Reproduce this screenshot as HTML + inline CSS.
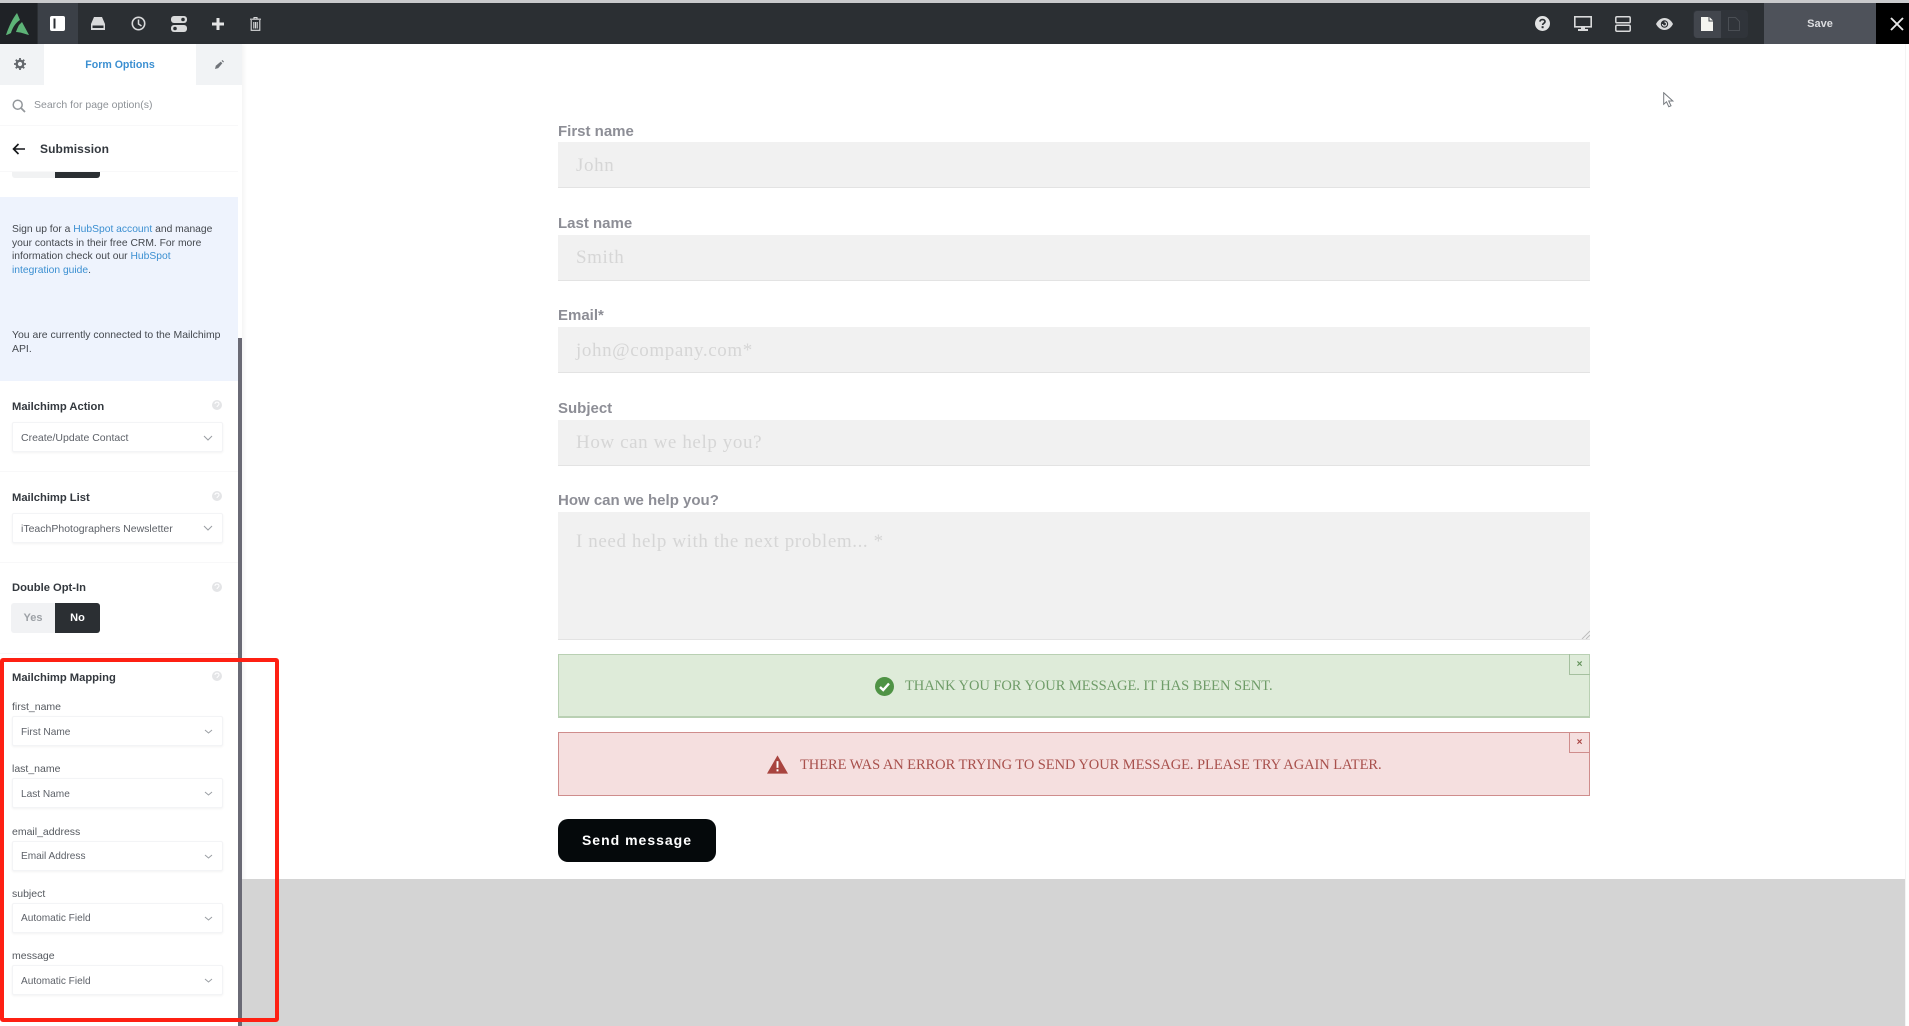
<!DOCTYPE html>
<html lang="en"><head><meta charset="utf-8"><title>Form Options</title>
<style>
html,body{margin:0;padding:0;width:1909px;height:1026px;overflow:hidden;background:#fff;font-family:"Liberation Sans",sans-serif}
div,svg,span.a{position:absolute}
.t{position:absolute;white-space:nowrap;line-height:16px}
.lab{font-size:11.2px;font-weight:700;color:#33383e;left:12px}
.sel{left:12px;width:211px;height:30px;background:#fff;border:1px solid #f3f4f6;box-shadow:0 1px 2px rgba(0,0,0,.05);border-radius:2px;box-sizing:border-box}
.sv{left:21px;font-size:10.5px;color:#5d6168}
.sm{font-size:10.1px}
.f{left:12px;font-size:10.5px;color:#55595f}
.hl{left:0;width:238px;height:1px;background:#f8f8f9}
.fl{left:558px;font-size:15px;font-weight:700;color:#8d8e96;line-height:18px;position:absolute;white-space:nowrap}
.in{left:558px;width:1032px;height:46px;background:#f1f1f1;border-bottom:1px solid #e3e3e3;box-sizing:border-box}
.ph{position:absolute;left:18px;font-family:"Liberation Serif",serif;font-size:19px;color:#d6d6d6;line-height:22px;white-space:nowrap;letter-spacing:.6px}
</style></head><body>

<div style="left:0;top:0;width:1909px;height:3px;background:#c9cacc"></div>
<div style="left:0;top:3px;width:1909px;height:41px;background:#2b2f33"></div>
<div style="left:0;top:3px;width:37px;height:41px;background:#1f2226"></div>
<div style="left:38px;top:3px;width:40px;height:41px;background:#3b4047"></div>

<svg style="left:5px;top:12px" width="25" height="24" viewBox="0 0 25 24"><path d="M1 23 C4 14 8 6 12 1 L15 8 C10 11 7 17 6 21 C4 22 2 23 1 23Z" fill="#5db377"/><path d="M14 13 L17 10 L24 23 C20 22 15 20 11 20 C12 17 13 15 14 13Z" fill="#5db377"/></svg>
<svg style="left:50px;top:16px" width="15" height="15" viewBox="0 0 15 15"><rect width="15" height="15" rx="2" fill="#fff"/><rect x="3.5" y="2.5" width="2" height="10" fill="#2b2f33"/></svg>
<svg style="left:91px;top:17px" width="14" height="13" viewBox="0 0 14 13"><path d="M3 0H11L14 7V13H0V7Z" fill="#d9dadb"/><rect x="1.5" y="8.5" width="11" height="2.5" fill="#2b2f33"/></svg>
<svg style="left:131px;top:16px" width="15" height="15" viewBox="0 0 15 15"><circle cx="7.5" cy="7.5" r="6.2" fill="none" stroke="#d9dadb" stroke-width="1.6"/><path d="M7.5 3.5V8L10.5 10" fill="none" stroke="#d9dadb" stroke-width="1.5"/></svg>
<svg style="left:171px;top:16px" width="16" height="16" viewBox="0 0 16 16"><rect width="16" height="7" rx="3" fill="#d9dadb"/><rect y="9" width="16" height="7" rx="3" fill="#d9dadb"/><circle cx="12" cy="3.5" r="1.8" fill="#2b2f33"/><circle cx="4" cy="12.5" r="1.8" fill="#2b2f33"/></svg>
<svg style="left:212px;top:18px" width="12" height="12" viewBox="0 0 12 12"><path d="M4.5 0H7.5V4.5H12V7.5H7.5V12H4.5V7.5H0V4.5H4.5Z" fill="#e4e5e6"/></svg>
<svg style="left:250px;top:17px" width="11" height="14" viewBox="0 0 11 14"><path d="M0 2.2H11M4 2V.6H7V2M1.2 3V13.3H9.8V3M3.8 5V11.5M5.5 5V11.5M7.2 5V11.5" fill="none" stroke="#d9dadb" stroke-width="1.1"/></svg>

<svg style="left:1535px;top:16px" width="15" height="15" viewBox="0 0 15 15"><circle cx="7.5" cy="7.5" r="7.5" fill="#e2e3e4"/><path d="M5 5.6C5 2.9 10 2.9 10 5.6C10 7.4 7.6 7.3 7.6 9" fill="none" stroke="#2b2f33" stroke-width="1.7"/><rect x="6.6" y="10.2" width="2" height="2" fill="#2b2f33"/></svg>
<svg style="left:1574px;top:16px" width="18" height="15" viewBox="0 0 18 15"><rect x=".8" y=".8" width="16.4" height="10" fill="none" stroke="#d9dadb" stroke-width="1.6"/><path d="M7 11V13H4V15H14V13H11V11Z" fill="#d9dadb"/></svg>
<svg style="left:1615px;top:16px" width="16" height="16" viewBox="0 0 16 16"><rect x=".8" y=".8" width="14.4" height="6" rx="1.2" fill="none" stroke="#d9dadb" stroke-width="1.5"/><rect x=".8" y="9.2" width="14.4" height="6" rx="1.2" fill="none" stroke="#d9dadb" stroke-width="1.5"/></svg>
<svg style="left:1656px;top:18px" width="17" height="12" viewBox="0 0 17 12"><path d="M0 6C4-2 13-2 17 6C13 14 4 14 0 6Z" fill="#d9dadb"/><circle cx="8.5" cy="6" r="3.7" fill="#2b2f33"/><path d="M6.5 6A2 2 0 1 0 8.5 4" fill="none" stroke="#d9dadb" stroke-width="1.2"/></svg>
<div style="left:1693px;top:10px;width:55px;height:28px;background:#30343a;border-radius:4px"></div>
<div style="left:1694px;top:11px;width:27px;height:27px;background:#42464d;border-radius:3px 0 0 3px"></div>
<svg style="left:1701px;top:17px" width="12" height="14" viewBox="0 0 12 14"><path d="M0 0H7.5V4.5H12V14H0ZM8.5 0L12 3.5H8.5Z" fill="#f4f4f0"/></svg>
<svg style="left:1728px;top:17px" width="12" height="14" viewBox="0 0 12 14"><path d="M.5.5H7.500L11.500 4.500V13.500H.5Z" fill="none" stroke="#4a4e54"/></svg>
<div style="left:1764px;top:3px;width:112px;height:41px;background:#4e525a"></div>
<div class="t" style="left:1764px;width:112px;text-align:center;top:16px;font-size:11px;font-weight:700;color:#dcdde0">Save</div>
<div style="left:1876px;top:3px;width:33px;height:41px;background:#000"></div>
<svg style="left:1890px;top:17px" width="14" height="14" viewBox="0 0 14 14"><path d="M1 1L13 13M13 1L1 13" stroke="#e8e8e8" stroke-width="1.9"/></svg>

<div style="left:0;top:44px;width:242px;height:982px;background:#fff;box-shadow:2px 0 4px rgba(0,0,0,.05)"></div>
<div style="left:0;top:44px;width:44px;height:41px;background:#f1f3f5"></div>
<div style="left:196px;top:44px;width:46px;height:41px;background:#f1f3f5"></div>
<svg style="left:14px;top:58px" width="12" height="12" viewBox="0 0 13 13"><circle cx="6.5" cy="6.5" r="3.6" fill="none" stroke="#64686d" stroke-width="2.6"/><path d="M6.5 0V2.5M6.5 10.5V13M0 6.5H2.5M10.500 6.5H13M1.900 1.900L3.600 3.600M9.400 9.400L11.100 11.100M11.100 1.900L9.400 3.600M3.600 9.400L1.900 11.100" stroke="#64686d" stroke-width="2"/></svg>
<div class="t" style="left:44px;width:152px;text-align:center;top:57px;font-size:10.6px;font-weight:700;color:#3b8fd1">Form Options</div>
<svg style="left:215px;top:60px" width="9" height="9" viewBox="0 0 11 11"><path d="M0 11L1 7L7 2L9 4L4 10Z" fill="#707479"/><path d="M8 1L9 0L11 2L10 3Z" fill="#707479"/></svg>
<svg style="left:12px;top:99px" width="14" height="14" viewBox="0 0 14 14"><circle cx="5.7" cy="5.7" r="4.5" fill="none" stroke="#93979b" stroke-width="1.5"/><path d="M9 9L13 13" stroke="#93979b" stroke-width="1.8"/></svg>
<div class="t" style="left:34px;top:97px;font-size:10.5px;color:#8e9297">Search for page option(s)</div>
<div class="hl" style="top:125px"></div>
<svg style="left:12px;top:143px" width="13" height="12" viewBox="0 0 13 12"><path d="M13 6H2M6.5 1L1.5 6L6.5 11" fill="none" stroke="#15171a" stroke-width="1.6"/></svg>
<div class="t" style="left:40px;top:141px;font-size:12px;font-weight:700;color:#33383e;letter-spacing:.1px">Submission</div>
<div class="hl" style="top:171px"></div>
<div style="left:12px;top:172px;width:43px;height:6px;background:#f1f2f3;border-radius:0 0 0 3px"></div>
<div style="left:55px;top:172px;width:45px;height:6px;background:#2b2f33;border-radius:0 0 3px 0"></div>

<div style="left:0;top:197px;width:238px;height:184px;background:#eef3fd"></div>
<div class="f" style="top:223px;line-height:13.5px;white-space:nowrap;font-size:10.3px;color:#44484e;position:absolute">Sign up for a <span style="color:#3b8fd1">HubSpot account</span> and manage<br>your contacts in their free CRM. For more<br>information check out our <span style="color:#3b8fd1">HubSpot</span><br><span style="color:#3b8fd1">integration guide</span>.</div>
<div class="f" style="top:329px;line-height:13.5px;white-space:nowrap;font-size:10.45px;color:#44484e;position:absolute">You are currently connected to the Mailchimp<br>API.</div>

<div class="t lab" style="top:399px">Mailchimp Action</div>
<div class="sel" style="top:422px"></div><div class="t sv" style="top:430px">Create/Update Contact</div>
<div class="hl" style="top:471px"></div>
<div class="t lab" style="top:490px">Mailchimp List</div>
<div class="sel" style="top:513px"></div><div class="t sv" style="top:521px">iTeachPhotographers Newsletter</div>
<div class="hl" style="top:562px"></div>
<div class="t lab" style="top:580px">Double Opt-In</div>
<div style="left:11px;top:603px;width:44px;height:30px;background:#f1f2f4;border-radius:3px 0 0 3px"></div>
<div class="t" style="left:11px;width:44px;text-align:center;top:610px;font-size:11px;font-weight:700;color:#9da1a6">Yes</div>
<div style="left:55px;top:603px;width:45px;height:30px;background:#2b2f33;border-radius:0 3px 3px 0"></div>
<div class="t" style="left:55px;width:45px;text-align:center;top:610px;font-size:11px;font-weight:700;color:#fff">No</div>
<div class="hl" style="top:653px"></div>

<div class="t lab" style="top:670px">Mailchimp Mapping</div>
<div class="t f" style="top:699px">first_name</div>
<div class="sel" style="top:716px"></div><div class="t sv sm" style="top:725px">First Name</div>
<div class="t f" style="top:761px">last_name</div>
<div class="sel" style="top:778px"></div><div class="t sv sm" style="top:787px">Last Name</div>
<div class="t f" style="top:824px">email_address</div>
<div class="sel" style="top:841px"></div><div class="t sv sm" style="top:849px">Email Address</div>
<div class="t f" style="top:886px">subject</div>
<div class="sel" style="top:903px"></div><div class="t sv sm" style="top:911px">Automatic Field</div>
<div class="t f" style="top:948px">message</div>
<div class="sel" style="top:965px"></div><div class="t sv sm" style="top:974px">Automatic Field</div>

<svg style="left:0;top:0;pointer-events:none" width="242" height="1026" viewBox="0 0 242 1026">
<g fill="none" stroke="#9a9ea3" stroke-width="1"><path d="M204 436L208 440L212 436M204 526L208 530L212 526M205 730L208.500 733L212 730M205 792L208.500 795L212 792M205 855L208.500 858L212 855M205 917L208.500 920L212 917M205 979L208.500 982L212 979"/></g>
<g fill="#e4e5e7"><circle cx="217" cy="405" r="5"/><circle cx="217" cy="496" r="5"/><circle cx="217" cy="587" r="5"/><circle cx="217" cy="676" r="5"/></g>
<g fill="none" stroke="#fff" stroke-width="1"><path d="M215 404c0-2.500 4-2.500 4 0c0 1.500-2 1.500-2 3M215 495c0-2.500 4-2.500 4 0c0 1.500-2 1.500-2 3M215 586c0-2.500 4-2.500 4 0c0 1.500-2 1.500-2 3M215 675c0-2.500 4-2.500 4 0c0 1.500-2 1.500-2 3"/></g>
</svg>
<div style="left:238px;top:338px;width:4px;height:688px;background:#6a6a75"></div>

<div style="left:242px;top:879px;width:1663px;height:147px;background:#d4d4d4"></div>
<div style="left:1905px;top:44px;width:1px;height:982px;background:#f4f4f4"></div>

<svg style="left:1663px;top:92px" width="11" height="16" viewBox="0 0 11 16"><path d="M.7.7V12.300L3.500 9.800L5.800 14.700L8 13.700L5.700 9H9.800Z" fill="#fff" stroke="#777b80"/></svg>

<div class="fl" style="top:123px">First name</div>
<div class="in" style="top:142px"><span class="ph" style="top:13px">John</span></div>
<div class="fl" style="top:215px">Last name</div>
<div class="in" style="top:235px"><span class="ph" style="top:12px">Smith</span></div>
<div class="fl" style="top:307px">Email*</div>
<div class="in" style="top:327px"><span class="ph" style="top:13px">john@company.com*</span></div>
<div class="fl" style="top:400px">Subject</div>
<div class="in" style="top:420px"><span class="ph" style="top:12px">How can we help you?</span></div>
<div class="fl" style="top:492px">How can we help you?</div>
<div class="in" style="top:512px;height:128px"><span class="ph" style="top:19px">I need help with the next problem... *</span></div>
<svg style="left:1581px;top:630px" width="9" height="9" viewBox="0 0 9 9"><path d="M1 9L9 1M5 9L9 5" stroke="#bdbdbd"/></svg>

<div style="left:558px;top:654px;width:1032px;height:64px;background:#deebd9;border:1px solid #b9d0b3;border-bottom-width:2px;box-sizing:border-box"></div>
<div style="left:1569px;top:654px;width:21px;height:21px;box-sizing:border-box;border:1px solid #a5c09f;border-top:0;border-right:0"></div>
<div class="t" style="left:1569px;width:21px;text-align:center;top:657px;font-size:10px;font-weight:700;color:#63925a">×</div>
<svg style="left:875px;top:677px" width="19" height="19" viewBox="0 0 19 19"><circle cx="9.500" cy="9.500" r="9.500" fill="#4f9345"/><path d="M5 10L8.200 13L14 6.500" fill="none" stroke="#fff" stroke-width="2.400"/></svg>
<div class="t" style="left:905px;top:676px;line-height:20px;font-family:'Liberation Serif',serif;font-size:14.500px;color:#6f9c68;letter-spacing:-.05px">THANK YOU FOR YOUR MESSAGE. IT HAS BEEN SENT.</div>

<div style="left:558px;top:732px;width:1032px;height:64px;background:#f5dfdf;border:1px solid #cf8d8c;box-sizing:border-box"></div>
<div style="left:1569px;top:732px;width:21px;height:21px;box-sizing:border-box;border:1px solid #cf8d8c;border-top:0;border-right:0"></div>
<div class="t" style="left:1569px;width:21px;text-align:center;top:735px;font-size:10px;font-weight:700;color:#a94442">×</div>
<svg style="left:767px;top:755px" width="21" height="19" viewBox="0 0 22 19"><path d="M11 0L22 19H0Z" fill="#a8443f"/><rect x="10" y="6" width="2" height="7" fill="#fff"/><rect x="10" y="14.500" width="2" height="2.200" fill="#fff"/></svg>
<div class="t" style="left:800px;top:755px;line-height:20px;font-family:'Liberation Serif',serif;font-size:14.500px;color:#a8504c;letter-spacing:-.07px">THERE WAS AN ERROR TRYING TO SEND YOUR MESSAGE. PLEASE TRY AGAIN LATER.</div>

<div style="left:558px;top:819px;width:158px;height:43px;background:#05090b;border-radius:10px"></div>
<div class="t" style="left:558px;width:158px;text-align:center;top:832px;font-size:14px;font-weight:700;color:#fff;letter-spacing:1px">Send message</div>

<div style="left:0;top:658px;width:279px;height:364px;box-sizing:border-box;border:4px solid #fe2013;border-radius:3px"></div>
</body></html>
